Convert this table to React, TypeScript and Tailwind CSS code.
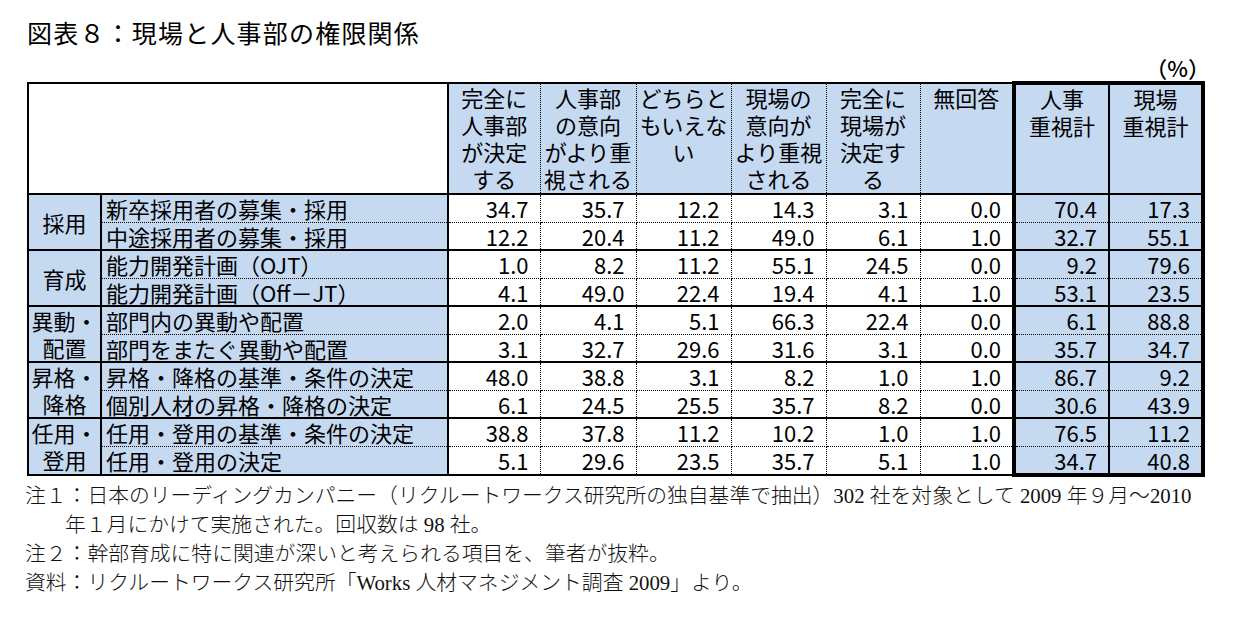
import React from 'react';

type Row = { item: string; values: number[] };
type Group = { label: React.ReactNode; rows: Row[] };

const groups: Group[] = [
  {
    label: '採用',
    rows: [
      { item: '新卒採用者の募集・採用', values: [34.7, 35.7, 12.2, 14.3, 3.1, 0.0, 70.4, 17.3] },
      { item: '中途採用者の募集・採用', values: [12.2, 20.4, 11.2, 49.0, 6.1, 1.0, 32.7, 55.1] },
    ],
  },
  {
    label: '育成',
    rows: [
      { item: '能力開発計画（OJT）', values: [1.0, 8.2, 11.2, 55.1, 24.5, 0.0, 9.2, 79.6] },
      { item: '能力開発計画（Off－JT）', values: [4.1, 49.0, 22.4, 19.4, 4.1, 1.0, 53.1, 23.5] },
    ],
  },
  {
    label: (
      <>
        異動・
        <br />
        配置
      </>
    ),
    rows: [
      { item: '部門内の異動や配置', values: [2.0, 4.1, 5.1, 66.3, 22.4, 0.0, 6.1, 88.8] },
      { item: '部門をまたぐ異動や配置', values: [3.1, 32.7, 29.6, 31.6, 3.1, 0.0, 35.7, 34.7] },
    ],
  },
  {
    label: (
      <>
        昇格・
        <br />
        降格
      </>
    ),
    rows: [
      { item: '昇格・降格の基準・条件の決定', values: [48.0, 38.8, 3.1, 8.2, 1.0, 1.0, 86.7, 9.2] },
      { item: '個別人材の昇格・降格の決定', values: [6.1, 24.5, 25.5, 35.7, 8.2, 0.0, 30.6, 43.9] },
    ],
  },
  {
    label: (
      <>
        任用・
        <br />
        登用
      </>
    ),
    rows: [
      { item: '任用・登用の基準・条件の決定', values: [38.8, 37.8, 11.2, 10.2, 1.0, 1.0, 76.5, 11.2] },
      { item: '任用・登用の決定', values: [5.1, 29.6, 23.5, 35.7, 5.1, 1.0, 34.7, 40.8] },
    ],
  },
];

const headers: string[][] = [
  ['完全に', '人事部', 'が決定', 'する'],
  ['人事部', 'の意向', 'がより重', '視される'],
  ['どちらと', 'もいえな', 'い'],
  ['現場の', '意向が', 'より重視', 'される'],
  ['完全に', '現場が', '決定す', 'る'],
  ['無回答'],
  ['人事', '重視計'],
  ['現場', '重視計'],
];

const colWidths = [73, 347, 92, 96, 95, 95, 94, 94, 95, 94];

// per-column border classes for the value cells (index 0..7)
const valueCellBorder = (i: number) => {
  if (i === 0) return 'border-l-2 [border-left-style:solid]';
  if (i === 6) return 'bg-[#c5d9f1] border-l-4 [border-left-style:solid]';
  if (i === 7) return 'bg-[#c5d9f1] border-l-2 [border-left-style:solid] border-r-4 [border-right-style:solid]';
  return '';
};

export default function App() {
  return (
    <div
      className="w-[1243px] h-[619px] bg-white text-black pl-[27px] pt-[16px]"
      style={{ fontFamily: '"Noto Sans CJK JP", "Noto Sans", sans-serif' }}
    >
      {/* Title */}
      <h1 className="text-[25px] leading-[32px] font-normal tracking-[1.2px]">図表８：現場と人事部の権限関係</h1>

      <div className="w-[1187px] flex justify-end pr-[4px] text-[22px] leading-[24px] mt-[7px] font-medium">（%）</div>

      {/* Table */}
      <table className="table-fixed border-collapse mt-[2px] text-[22px]" style={{ width: 1177 }}>
        <colgroup>
          {colWidths.map((w, i) => (
            <col key={i} style={{ width: w }} />
          ))}
        </colgroup>
        <thead>
          <tr className="h-[111px]">
            <th
              colSpan={2}
              className="border-2 border-black [border-style:solid] bg-white"
            />
            {headers.map((lines, i) => (
              <th
                key={i}
                className={`align-top font-normal leading-[27px] pt-0 whitespace-nowrap bg-[#c5d9f1] border border-dotted border-black border-t-2 [border-top-style:solid] border-b-2 [border-bottom-style:solid] ${
                  i === 0 ? 'border-l-2 [border-left-style:solid]' : ''
                } ${i === 6 ? 'border-l-4 [border-left-style:solid] border-t-4' : ''} ${
                  i === 7 ? 'border-l-2 [border-left-style:solid] border-r-4 [border-right-style:solid] border-t-4' : ''
                }`}
              >
                {lines.map((l, j) => (
                  <div key={j}>{l}</div>
                ))}
              </th>
            ))}
          </tr>
        </thead>
        <tbody>
          {groups.map((g, gi) =>
            g.rows.map((r, ri) => {
              const isLast = gi === groups.length - 1 && ri === 1;
              const rowBorder = ri === 0 ? 'border-t-2 [border-top-style:solid]' : '';
              const bottom = isLast ? 'border-b-2 [border-bottom-style:solid]' : '';
              return (
                <tr key={`${gi}-${ri}`} className="h-[28px]">
                  {ri === 0 && (
                    <td
                      rowSpan={2}
                      className="bg-[#c5d9f1] text-center leading-[27px] border-2 border-black [border-style:solid]"
                    >
                      {g.label}
                    </td>
                  )}
                  <td
                    className={`bg-[#c5d9f1] pl-[4px] leading-[26px] whitespace-nowrap border border-dotted border-black border-l-2 [border-left-style:solid] ${rowBorder} ${bottom}`}
                  >
                    {r.item}
                  </td>
                  {r.values.map((v, vi) => (
                    <td
                      key={vi}
                      className={`text-right pr-[11px] leading-[26px] border border-dotted border-black ${rowBorder} ${
                        isLast ? (vi >= 6 ? 'border-b-4 [border-bottom-style:solid]' : bottom) : ''
                      } ${valueCellBorder(vi)}`}
                    >
                      {v.toFixed(1)}
                    </td>
                  ))}
                </tr>
              );
            })
          )}
        </tbody>
      </table>

      {/* Notes */}
      <div
        className="-ml-[2px] mt-[4px] text-[20.8px] leading-[29px] text-[#111] whitespace-nowrap"
        style={{ fontFamily: '"Liberation Serif", "Noto Sans CJK JP", serif' }}
      >
        <div className="font-light">注１：日本のリーディングカンパニー（リクルートワークス研究所の独自基準で抽出）302 社を対象として 2009 年９月～2010</div>
        <div className="font-light pl-[40px]">年１月にかけて実施された。回収数は 98 社。</div>
        <div className="font-light">注２：幹部育成に特に関連が深いと考えられる項目を、筆者が抜粋。</div>
        <div className="font-light">資料：リクルートワークス研究所「Works 人材マネジメント調査 2009」より。</div>
      </div>
    </div>
  );
}
